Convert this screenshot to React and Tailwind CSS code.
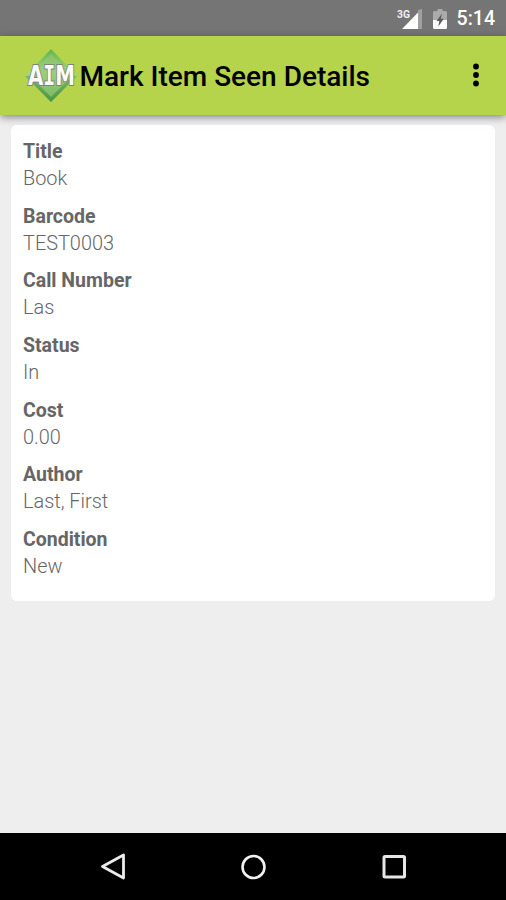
const details = [
  { label: "Title", value: "Book" },
  { label: "Barcode", value: "TEST0003" },
  { label: "Call Number", value: "Las" },
  { label: "Status", value: "In" },
  { label: "Cost", value: "0.00" },
  { label: "Author", value: "Last, First" },
  { label: "Condition", value: "New" },
];

function StatusBar() {
  return (
    <div className="h-9 shrink-0 bg-[#757575] flex items-center justify-end pr-[11px] pt-[2px] text-white">
      {/* signal 3G */}
      <svg width="26" height="26" viewBox="0 -3 26 26" className="mr-[10px] mb-px overflow-visible">
        <path d="M21 1L25 0V20H21Z" fill="#a0a0a0" />
        <path d="M5 20L21 3.5V20Z" fill="#fff" />
        <text x="0" y="9" fontSize="11" fontWeight="700" fill="#f0f0f0" textLength="13" lengthAdjust="spacingAndGlyphs">
          3G
        </text>
      </svg>
      {/* battery */}
      <svg width="14" height="20" viewBox="0 0 14 20" className="mr-[10px]">
        <path d="M4.5 0H9.5V2H12.5Q14 2 14 3.5V12H0V3.5Q0 2 1.5 2H4.5Z" fill="#ababab" />
        <path d="M0 11H14V18.5Q14 20 12.5 20H1.5Q0 20 0 18.5Z" fill="#fff" />
        <path d="M9 4.5L3.5 12H6.3L5.3 17.5L10.8 9.8H7.8Z" fill="#5c5c5c" />
      </svg>
      <span className="text-[19.5px] leading-6 font-medium">5:14</span>
    </div>
  );
}

function Logo() {
  return (
    <svg width="56" height="56" viewBox="0 0 56 56" className="overflow-visible">
      <defs>
        <linearGradient id="gem" x1="0" y1="0" x2="0" y2="1">
          <stop offset="0" stopColor="#62b44b" />
          <stop offset="0.45" stopColor="#a4d77f" />
          <stop offset="1" stopColor="#559f4a" />
        </linearGradient>
      </defs>
      <path d="M28 1L54 28L28 54L2 28Z" fill="url(#gem)" />
      <path d="M28 6L49 28L28 49L7 28Z" fill="#95c879" fillOpacity="0.55" />
      <path d="M2 28L28 54L54 28L49 28L28 49L7 28Z" fill="#398540" fillOpacity="0.35" />
      {/* the I keeps its serifs, so it comes from the mono face */}
      <text
        x="5"
        y="37"
        fontFamily="'DejaVu Sans', sans-serif"
        fontWeight="700"
        fontSize="26"
        textLength="47"
        lengthAdjust="spacingAndGlyphs"
        fill="#fafafa"
        stroke="#77857a"
        strokeWidth="2"
        paintOrder="stroke"
      >
        A<tspan fontFamily="'DejaVu Sans Mono', monospace">I</tspan>M
      </text>
    </svg>
  );
}

function Toolbar() {
  return (
    <header className="relative z-10 h-[79px] shrink-0 bg-[#b6d34c] flex items-center pl-[23px] pr-[26px] shadow-[0_2px_8px_rgba(50,50,70,0.6)]">
      <Logo />
      <h1 className="ml-[0.5px] pt-[2px] flex-1 text-[28px] font-medium text-black whitespace-nowrap">
        Mark Item Seen Details
      </h1>
      <svg width="8" height="24" viewBox="0 0 8 24" className="mb-[2px]">
        <circle cx="4" cy="3.5" r="2.9" />
        <circle cx="4" cy="12" r="2.9" />
        <circle cx="4" cy="20.5" r="2.9" />
      </svg>
    </header>
  );
}

function NavBar() {
  return (
    <nav className="h-[67px] shrink-0 bg-black flex items-center justify-between pl-[99px] pr-[98px]">
      <svg width="28" height="28" viewBox="0 0 28 28" fill="none" stroke="#ececec" strokeWidth="2.8" strokeLinejoin="round">
        <path d="M3.5 13.5L24.5 2V25Z" />
      </svg>
      <svg width="28" height="28" viewBox="0 0 28 28" fill="none" stroke="#f2f2f2" strokeWidth="2.6">
        <circle cx="13.5" cy="14" r="11" />
      </svg>
      <svg width="28" height="28" viewBox="0 0 28 28" fill="none" stroke="#e6e6e6" strokeWidth="3">
        <rect x="4" y="3.5" width="20.5" height="20.5" rx="1" />
      </svg>
    </nav>
  );
}

export default function App() {
  return (
    <div className="h-[900px] w-[506px] flex flex-col overflow-hidden bg-[#eeeeee] font-['Roboto',sans-serif]">
      <StatusBar />
      <Toolbar />
      <main className="flex-1 px-[11px] pt-[10px]">
        <dl className="h-[476px] rounded-md bg-white pl-3 pt-[13px] text-[#666]">
          {details.map((item) => (
            <div key={item.label} className="h-[64.7px]">
              <dt className="h-[27px] text-[19.5px] leading-[27px] font-bold">{item.label}</dt>
              <dd className="h-[27px] text-[19.9px] leading-[27px] font-light">{item.value}</dd>
            </div>
          ))}
        </dl>
      </main>
      <NavBar />
    </div>
  );
}
